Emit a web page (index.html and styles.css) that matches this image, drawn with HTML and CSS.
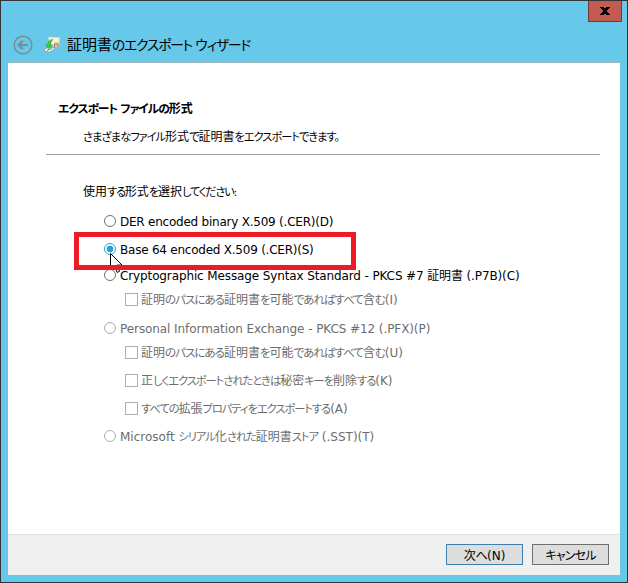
FILE: index.html
```html
<!DOCTYPE html>
<html lang="ja">
<head>
<meta charset="utf-8">
<title>証明書のエクスポート ウィザード</title>
<link rel="stylesheet" href="styles.css">
</head>
<body>
<div class="window">
  <button class="close" aria-label="閉じる"><svg width="10" height="8" viewBox="0 0 10 8"><path d="M0 0h4v1h2V0h4v1H9v1H8v1H7v2h1v1h1v1h1v1H6V7H4v1H0V7h1V6h1V5h1V3H2V2H1V1H0z"/></svg></button>
  <header class="titlebar">
    <svg class="back" width="20" height="20" viewBox="0 0 20 20" fill="none" stroke="#778e98"><circle cx="10" cy="10" r="8.8" stroke-width="1.6"/><path d="M15 10H6M9.8 5.7 5.5 10l4.3 4.3" stroke-width="2.2"/></svg>
    <svg class="cert" width="17" height="17" viewBox="0 0 17 17"><path d="M5.5 1l11 .5-.5 9-9-.5z" fill="#f5f2df" stroke="#d5d2c0" stroke-width=".8"/><path d="M1 13.500l3-2h8l-2 3-4 1.800-4-1z" fill="#e8eeee" stroke="#879ba2" stroke-width=".8"/><path d="M4 14.500l5-2" stroke="#78898c"/><path d="M10 3.500C6 4 4.500 6 5 9H2.500l3 4 4.500-4H8c-.5-2 0-4 2-5.500z" fill="#43c447" stroke="#2e9e3d" stroke-width=".5"/><path d="M11 6.500h4.500v3H11z" fill="#f2a92a"/><path d="M11.500 8.500v2m3.500-2v2" stroke="#385fa8"/></svg>
    <h1>証明書<span class="k">のエクスポート ウィザード</span></h1>
  </header>
  <main>
    <section class="intro">
      <h2><span class="k">エクスポート ファイルの</span>形式</h2>
      <p><span class="k">さまざまなファイル</span>形式<span class="k">で</span>証明書<span class="k">をエクスポートできます。</span></p>
    </section>
    <form class="formats">
      <p class="prompt">使用<span class="k">する</span>形式<span class="k">を</span>選択<span class="k">してください:</span></p>
      <label class="row r1"><i class="radio"></i><span>DER encoded binary X.509 (.CER)(D)</span></label>
      <label class="row r2"><i class="radio on"></i><span>Base 64 encoded X.509 (.CER)(S)</span></label>
      <label class="row r3"><i class="radio"></i><span>Cryptographic Message Syntax Standard - PKCS #7 証明書 (.P7B)(C)</span></label>
      <label class="row sub off r4"><i class="check"></i><span>証明<span class="k h">のパスにある</span>証明書<span class="k h">を</span>可能<span class="k h">であればすべて</span>含<span class="k h">む</span>(I)</span></label>
      <label class="row off r5"><i class="radio"></i><span>Personal Information Exchange - PKCS #12 (.PFX)(P)</span></label>
      <label class="row sub off r6"><i class="check"></i><span>証明<span class="k h">のパスにある</span>証明書<span class="k h">を</span>可能<span class="k h">であればすべて</span>含<span class="k h">む</span>(U)</span></label>
      <label class="row sub off r7"><i class="check"></i><span>正<span class="k">しくエクスポートされたときは</span>秘密<span class="k">キーを</span>削除<span class="k">する</span>(K)</span></label>
      <label class="row sub off r8"><i class="check"></i><span><span class="k">すべての</span>拡張<span class="k">プロパティをエクスポートする</span>(A)</span></label>
      <label class="row off r9"><i class="radio"></i><span>Microsoft <span class="k">シリアル</span>化<span class="k">された</span>証明書<span class="k">ストア</span> (.SST)(T)</span></label>
    </form>
    <footer>
      <button class="btn next">次<span class="k">へ</span>(N)</button>
      <button class="btn"><span class="k">キャンセル</span></button>
    </footer>
  </main>
  <svg class="cursor" width="14" height="22" viewBox="0 0 14 22"><path d="M.5.5v16l3.8-3.600 2.800 6.500 2.500-1.100-2.800-6.200h5.300z" fill="#fff" stroke="#000"/></svg>
  <div class="highlight"></div>
</div>
</body>
</html>
```
FILE: styles.css
```css
* { box-sizing: border-box; }
body { margin: 0; font: 12px/16px "DejaVu Sans", "Noto Sans CJK JP", sans-serif; color: #000; }
h1, h2, p { margin: 0; font-weight: 400; }
.window { position: relative; width: 628px; height: 583px; padding: 0 7px; border: 1px solid #33353a; background: #66c9ea; display: flex; flex-direction: column; white-space: nowrap; }
.close { position: absolute; right: 5px; top: 0; width: 34px; height: 21px; padding: 0; border: 1px solid #6a3a40; border-top: 0; background: #c35b51; display: flex; align-items: center; justify-content: center; }
.titlebar { height: 61px; padding: 27px 0 0 5px; display: flex; align-items: center; flex: none; }
.cert { margin: -2px 0 0 10px; }
h1 { margin-left: 7px; font-size: 15px; line-height: 20px; }
.k { font-size: .935em; line-height: 1; font-feature-settings: "palt"; letter-spacing: -1px; }
.k.h { font-size: .96em; }
h1 .k { font-size: .917em; letter-spacing: -1.15px; }
h2 .k { font-size: .98em; }
.prompt .k { letter-spacing: -1.2px; }
.btn .k { font-size: 1em; letter-spacing: -.8px; }
main { width: 612px; height: 514px; background: #fff; border-top: 1px solid #9eb5bf; display: flex; flex-direction: column; }
.intro { margin: 0 20px 0 38px; height: 92px; padding: 38px 0 0 12px; border-bottom: 1px solid #a0a0a0; }
h2 { font-size: 12px; font-weight: 700; }
.intro p { margin: 12px 0 0 25px; }
.formats { flex: 1; padding: 29px 0 0 75px; }
.row { display: flex; align-items: center; height: 16px; margin-left: 21px; }
.row > span { margin-left: 4px; padding-top: 2px; }
.sub { margin-left: 42px; }
.sub > span { margin-left: 3px; }
.off { color: #6d6d6d; }
.r1 { margin-top: 13px; }
.r1, .r2 { letter-spacing: -.23px; }
.r3 { letter-spacing: -.12px; }
.r5 { letter-spacing: -.08px; }
.r2, .r7, .r8, .r9 { margin-top: 12px; }
.r3 { margin-top: 10px; }
.r4, .r6 { margin-top: 8px; }
.r5 { margin-top: 13px; }
.radio { width: 12px; height: 12px; border: 1px solid #707070; border-radius: 50%; background: #fff; flex: none; }
.radio.on { border-color: #2a9fd8; background: radial-gradient(circle, #26a0da 0 3px, #fff 3.7px); }
.check { width: 13px; height: 13px; border: 1px solid #707070; flex: none; }
.off .radio, .off .check { border-color: #aaafb0; }
footer { height: 42px; background: #f0f0f0; border-top: 1px solid #dfdfdf; border-bottom: 1px solid #9eb5bf; display: flex; justify-content: flex-end; gap: 9px; padding: 9px 11px 0 0; }
.btn { width: 77px; height: 21px; padding: 2px 0 0; border: 1px solid #707070; background: #ddd; font: inherit; line-height: 16px; color: #000; }
.next { border-color: #3c7fb1; }
.highlight { position: absolute; left: 73px; top: 231px; width: 282px; height: 38px; border: 5px solid #ed1c24; }
.cursor { position: absolute; left: 109px; top: 252px; }
```
